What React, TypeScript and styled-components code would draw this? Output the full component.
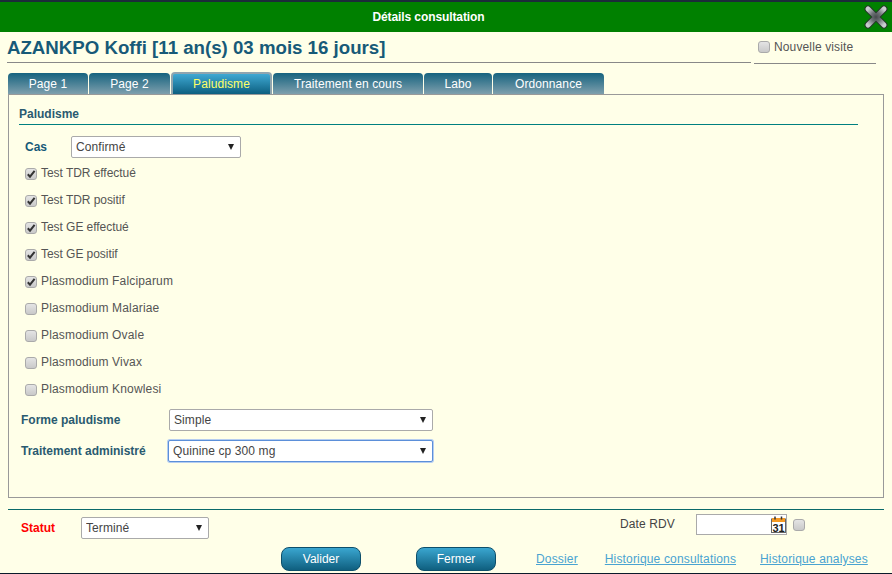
import React from "react";
import styled, { createGlobalStyle } from "styled-components";

const Global = createGlobalStyle`
  html, body { margin: 0; padding: 0; background: #ffffe8; }
  body { font-family: "Liberation Sans", Arial, sans-serif; font-size: 12px; color: #444; }
`;

const Page = styled.div`
  width: 892px; height: 574px; box-sizing: border-box; overflow: hidden;
  background: #ffffe8; border-top: 2px solid #1c2b3a; border-bottom: 1px solid #0a1a2a;
  display: flex; flex-direction: column; position: relative;
`;
const TitleBar = styled.div`
  height: 30px; flex: none; background: #008000; color: #fff; font-weight: bold; font-size: 12px; letter-spacing: -0.1px;
  display: flex; align-items: center; justify-content: center; position: relative; padding-right: 35px; box-sizing: border-box;
`;
const CloseIcon = styled.svg`
  position: absolute; right: 4px; top: 3px; width: 24px; height: 24px;
`;
const Header = styled.div`
  display: flex; height: 31px; flex: none; padding-left: 7px;
`;
const PatientName = styled.h1`
  margin: 0; width: 744px; height: 30px; border-bottom: 1px solid #888;
  font-size: 18.67px; font-weight: bold; line-height: 32px; color: #175a78; white-space: nowrap;
`;
const VisitBox = styled.label`
  margin-left: 3px; width: 122px; height: 32px; border-bottom: 1px solid #888;
  display: flex; align-items: center; gap: 4px; padding: 0 0 2px 4px; box-sizing: border-box;
  color: #555; letter-spacing: 0.13px;
`;
const Tabs = styled.div`
  display: flex; gap: 1px; margin: 10px 0 0 8px; height: 21px; flex: none; position: relative; z-index: 1;
`;
const Tab = styled.div<{ $w: number; $active?: boolean }>`
  width: ${(p) => p.$w}px; height: 21px; box-sizing: border-box; display: flex; align-items: center; justify-content: center;
  letter-spacing: 0.1px; border-radius: 4px 4px 0 0; color: ${(p) => (p.$active ? "#ffff66" : "#fff")};
  background: ${(p) => p.$active ? "linear-gradient(#3fa9d3, #0d5f80)" : "linear-gradient(#16637f, #7e9fad)"};
  ${(p) => p.$active ? "border: 2px solid #8fa5af; border-bottom: 0; height: 22px; margin-top: -1px;" : ""}
`;
const Panel = styled.div`
  margin: 0 0 0 8px; width: 876px; height: 404px; flex: none; box-sizing: border-box; border: 1px solid #999;
  padding: 12px 10px 0 10px; display: flex; flex-direction: column;
`;
const SectionTitle = styled.div`
  width: 839px; height: 17px; border-bottom: 1px solid #008080; font-weight: bold; color: #2a5a70; line-height: 15px;
`;
const CasRow = styled.div`
  display: flex; align-items: center; margin: 11px 0 0 6px; height: 22px;
`;
const CasLabel = styled.span`
  width: 46px; font-weight: bold; color: #175a78;
`;
const SelectWrap = styled.span<{ $w: number }>`
  display: inline-block; position: relative; width: ${(p) => p.$w}px; height: 22px;
  &::after {
    content: ""; position: absolute; right: 7px; top: 8px; width: 0; height: 0;
    border-left: 3px solid transparent; border-right: 3px solid transparent; border-top: 6px solid #222;
  }
`;
const NativeSelect = styled.select<{ $focus?: boolean }>`
  appearance: none; width: 100%; height: 100%; box-sizing: border-box; background: #fff; border-radius: 2px;
  border: 1px solid ${(p) => (p.$focus ? "#5b8fd9" : "#aaa")};
  box-shadow: ${(p) => (p.$focus ? "0 0 0 1px #b5cdf0" : "none")};
  font: 12px "Liberation Sans", Arial, sans-serif; color: #444; padding: 0 4px; outline: none;
  letter-spacing: 0.1px;
`;
const CheckList = styled.div`
  display: flex; flex-direction: column; margin: 7px 0 0 6px;
`;
const CheckRow = styled.label<{ $wide?: boolean }>`
  height: 27px; display: flex; align-items: flex-start; gap: 4px; color: #555; line-height: 16px;
  letter-spacing: ${(p) => (p.$wide ? "0.16px" : "-0.05px")};
`;
const Box = styled.span<{ $mt?: number }>`
  width: 12px; height: 12px; margin-top: ${(p) => p.$mt ?? 3}px; flex: none; box-sizing: border-box; border: 1px solid #aaa; border-radius: 3px;
  background: linear-gradient(#e4e4e4, #c9c9c9); display: inline-flex; align-items: center; justify-content: center;
`;
const FieldRow = styled.div<{ $mt: number }>`
  display: flex; align-items: center; margin: ${(p) => p.$mt}px 0 0 2px; height: 22px;
`;
const FieldLabel = styled.span<{ $w: number }>`
  width: ${(p) => p.$w}px; font-weight: bold; color: #2a5a70;
`;
const Rule = styled.div`
  margin: 11px 0 0 8px; width: 876px; height: 1px; background: #0a6a6a; flex: none;
`;
const Footer = styled.div`
  display: flex; height: 30px; flex: none; margin-left: 21px; position: relative;
`;
const StatusLabel = styled.span`
  width: 60px; font-weight: bold; color: #f00; margin-top: 11px;
`;
const StatusSlot = styled.div`
  margin-top: 7px; width: 539px;
`;
const DateLabel = styled.span`
  width: 76px; margin-top: 7px; color: #444; letter-spacing: 0.1px;
`;
const DateInput = styled.div`
  width: 91px; height: 21px; margin-top: 4px; box-sizing: border-box; border: 1px solid #aaa; background: #fff; display: flex; justify-content: flex-end; align-items: center;
`;
const DateCheck = styled.div`
  margin: 9px 0 0 6px;
`;
const Actions = styled.div`
  display: flex; margin: 7px 0 0 281px; align-items: center; height: 24px;
`;
const Button = styled.button<{ $ml?: number }>`
  width: 80px; height: 24px; margin-left: ${(p) => p.$ml ?? 0}px; box-sizing: border-box; border: 1px solid #0d4f6b; border-radius: 8px;
  background: linear-gradient(#3aa6d0, #0f5f7f); color: #fff; font: 12px "Liberation Sans", Arial, sans-serif; padding: 0;
`;
const Link = styled.a<{ $ml: number }>`
  margin-left: ${(p) => p.$ml}px; color: #49a3d1; text-decoration: underline; white-space: nowrap; letter-spacing: 0.16px;
`;

const Check = ({ on, mt }: { on?: boolean; mt?: number }) => (
  <Box $mt={mt}>
    {on && (
      <svg width="10" height="10" viewBox="0 0 10 10">
        <path d="M1.8 5.2 L4 7.6 L8.6 1.8" fill="none" stroke="#333" strokeWidth="2" />
      </svg>
    )}
  </Box>
);

const Sel = ({ w, value, focus }: { w: number; value: string; focus?: boolean }) => (
  <SelectWrap $w={w}>
    <NativeSelect $focus={focus} defaultValue={value}>
      <option>{value}</option>
    </NativeSelect>
  </SelectWrap>
);

const checks: [string, boolean][] = [
  ["Test TDR effectué", true],
  ["Test TDR positif", true],
  ["Test GE effectué", true],
  ["Test GE positif", true],
  ["Plasmodium Falciparum", true],
  ["Plasmodium Malariae", false],
  ["Plasmodium Ovale", false],
  ["Plasmodium Vivax", false],
  ["Plasmodium Knowlesi", false],
];

const tabs: [string, number][] = [
  ["Page 1", 80],
  ["Page 2", 81],
  ["Paludisme", 101],
  ["Traitement en cours", 150],
  ["Labo", 68],
  ["Ordonnance", 111],
];

export default function App() {
  return (
    <>
      <Global />
      <Page>
        <TitleBar>
          Détails consultation
          <CloseIcon viewBox="0 0 24 24">
            <defs>
              <radialGradient id="xg" gradientUnits="userSpaceOnUse" cx="12" cy="12" r="11">
                <stop offset="0" stopColor="#45494c" />
                <stop offset="0.45" stopColor="#6d7276" />
                <stop offset="1" stopColor="#c9cdd0" />
              </radialGradient>
            </defs>
            <path d="M4 4 L20 20 M20 4 L4 20" stroke="#26382a" strokeWidth="7" strokeLinecap="round" />
            <path d="M4 4 L20 20 M20 4 L4 20" stroke="url(#xg)" strokeWidth="5" strokeLinecap="round" />
          </CloseIcon>
        </TitleBar>
        <Header>
          <PatientName>AZANKPO Koffi [11 an(s) 03 mois 16 jours]</PatientName>
          <VisitBox>
            <Check mt={0} />
            Nouvelle visite
          </VisitBox>
        </Header>
        <Tabs>
          {tabs.map(([t, w]) => (
            <Tab key={t} $w={w} $active={t === "Paludisme"}>
              {t}
            </Tab>
          ))}
        </Tabs>
        <Panel>
          <SectionTitle>Paludisme</SectionTitle>
          <CasRow>
            <CasLabel>Cas</CasLabel>
            <Sel w={170} value="Confirmé" />
          </CasRow>
          <CheckList>
            {checks.map(([t, on]) => (
              <CheckRow key={t} $wide={t.startsWith("Plasmodium")}>
                <Check on={on} />
                {t}
              </CheckRow>
            ))}
          </CheckList>
          <FieldRow $mt={1}>
            <FieldLabel $w={148}>Forme paludisme</FieldLabel>
            <Sel w={264} value="Simple" />
          </FieldRow>
          <FieldRow $mt={9}>
            <FieldLabel $w={147}>Traitement administré</FieldLabel>
            <Sel w={265} value="Quinine cp 300 mg" focus />
          </FieldRow>
        </Panel>
        <Rule />
        <Footer>
          <StatusLabel>Statut</StatusLabel>
          <StatusSlot>
            <Sel w={128} value="Terminé" />
          </StatusSlot>
          <DateLabel>Date RDV</DateLabel>
          <DateInput>
            <svg width="15" height="17" viewBox="0 0 15 17">
              <rect x="0.5" y="3" width="14" height="13.5" fill="#fff" stroke="#666" />
              <rect x="1" y="2" width="13" height="4" fill="#f59a23" />
              <path d="M4 0.5V3.5M10.5 0.5V3.5" stroke="#333" strokeWidth="1.5" />
              <text x="7.5" y="15.5" textAnchor="middle" fontSize="11" fontWeight="bold" fill="#222" fontFamily="Liberation Sans">31</text>
            </svg>
          </DateInput>
          <DateCheck>
            <Check mt={0} />
          </DateCheck>
        </Footer>
        <Actions>
          <Button>Valider</Button>
          <Button $ml={55}>Fermer</Button>
          <Link $ml={40}>Dossier</Link>
          <Link $ml={27}>Historique consultations</Link>
          <Link $ml={24}>Historique analyses</Link>
        </Actions>
      </Page>
    </>
  );
}
